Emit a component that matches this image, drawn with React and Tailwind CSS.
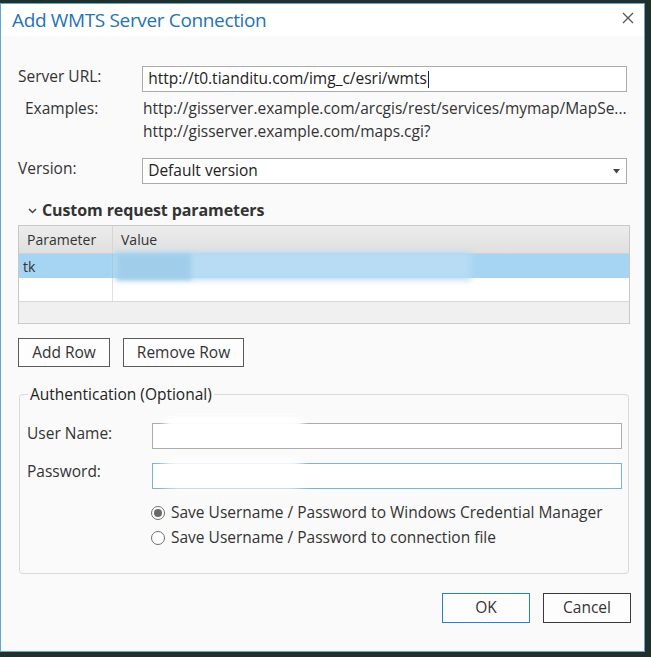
import React from 'react';

const font = { fontFamily: '"Open Sans", "Noto Sans", sans-serif' };

function Field({ children, className = '', border = 'border-[#ababab]' }) {
    return (
        <div className={`h-[26px] bg-white border ${border} flex items-center px-[5px] text-[15.5px] text-[#222] ${className}`}>
            {children}
        </div>
    );
}

function Radio({ checked, label }) {
    return (
        <div className="flex items-center gap-[6px] h-[25px]">
            <span className="w-[14px] h-[14px] rounded-full border border-[#707070] bg-white flex items-center justify-center">
                {checked && <span className="w-[8px] h-[8px] rounded-full bg-[#6a6a6a]" />}
            </span>
            <span>{label}</span>
        </div>
    );
}

export default function App() {
    return (
        <div className="w-[651px] h-[657px] bg-[#22302a] pt-[3px] overflow-hidden text-[15.5px] text-[#333]" style={font}>
            <div className="w-[645px] h-[649px] border border-[#5fa6d6] bg-[#fafafa] flex flex-col">
                {/* Titel */}
                <div className="h-[32px] flex items-center justify-between pl-[11px] pr-[10px] bg-white">
                    <h1 className="text-[19px] text-[#2572b4] tracking-[-0.35px]">Add WMTS Server Connection</h1>
                    <svg width="12" height="12" viewBox="0 0 12 12" className="mt-[-4px]">
                        <path d="M1 1 L11 11 M11 1 L1 11" stroke="#555" strokeWidth="1.3" />
                    </svg>
                </div>

                <div className="px-[17px] pt-[30px] flex flex-col">
                    {/* Server URL */}
                    <div className="flex items-start">
                        <div className="w-[125px] leading-[20px]">Server URL:</div>
                        <Field className="w-[488px]">
                            <span>http://t0.tianditu.com/img_c/esri/wmts</span>
                            <span className="w-px h-[17px] bg-[#222] ml-px" />
                        </Field>
                    </div>

                    {/* Examples */}
                    <div className="flex items-start mt-[5px] leading-[23px]">
                        <div className="w-[125px] pl-[7px]">Examples:</div>
                        <div className="text-[#333] whitespace-nowrap">
                            <div>http://gisserver.example.com/arcgis/rest/services/mymap/MapSe...</div>
                            <div>http://gisserver.example.com/maps.cgi?</div>
                        </div>
                    </div>

                    {/* Version */}
                    <div className="flex items-start mt-[15px]">
                        <div className="w-[125px] leading-[20px]">Version:</div>
                        <Field className="w-[488px] justify-between">
                            <span>Default version</span>
                            <svg width="7" height="5" viewBox="0 0 7 5" className="mr-[1px]">
                                <path d="M0 0 H7 L3.5 4.5 Z" fill="#444" />
                            </svg>
                        </Field>
                    </div>

                    {/* Custom request parameters */}
                    <div className="flex items-center mt-[15px] pl-[10px] h-[22px]">
                        <svg width="9" height="6" viewBox="0 0 9 6" className="mr-[5px] mt-[2px]">
                            <path d="M1 1 L4.5 4.5 L8 1" stroke="#444" strokeWidth="1.5" fill="none" />
                        </svg>
                        <span className="font-bold text-[16px] text-[#333] tracking-[-0.1px]">Custom request parameters</span>
                    </div>

                    <div className="mt-[4px] w-[612px] h-[99px] border border-[#c8c8c8] bg-[#f0f0f0] flex flex-col text-[14px]">
                        <div className="h-[28px] flex bg-gradient-to-b from-[#ececec] to-[#e0e0e0] border-b border-[#d0d0d0]">
                            <div className="w-[94px] pl-[8px] flex items-center border-r border-[#d6d6d6]">Parameter</div>
                            <div className="pl-[8px] flex items-center">Value</div>
                        </div>
                        <div className="h-[24px] flex bg-[#a6d5f3] relative">
                            <div className="w-[94px] pl-[4px] flex items-center border-r border-[#9cc6e2]">tk</div>
                            <div className="flex-1 relative">
                                <div className="absolute left-[2px] top-[-2px] w-[356px] h-[28px] bg-[#b7dcf4] blur-[3px]" />
                                <div className="absolute left-[4px] top-[0px] w-[74px] h-[26px] bg-[#a0cde9] blur-[2px]" />
                            </div>
                        </div>
                        <div className="h-[24px] flex bg-white border-b border-[#d8d8d8]">
                            <div className="w-[94px] border-r border-[#e0e0e0]" />
                        </div>
                    </div>

                    {/* Knappar */}
                    <div className="flex gap-[13px] mt-[14px]">
                        <button className="w-[92px] h-[29px] border border-[#5a5a5a] bg-[#fdfdfd] text-[15.5px] text-[#333]">Add Row</button>
                        <button className="w-[121px] h-[29px] border border-[#5a5a5a] bg-[#fdfdfd] text-[15.5px] text-[#333]">Remove Row</button>
                    </div>

                    {/* Authentication */}
                    <fieldset className="mt-[16px] ml-px w-[610px] h-[191px] border border-[#dadada] rounded-[4px] pl-[7px] pr-[5px]">
                        <legend className="px-[2px] ml-[1px] text-[#222]">Authentication (Optional)</legend>
                        <div className="flex items-start mt-[17px]">
                            <div className="w-[125px] leading-[20px]">User Name:</div>
                            <div className="relative">
                                <Field className="w-[470px]" />
                                <div className="absolute left-[12px] top-[-6px] w-[140px] h-[12px] bg-white blur-[3px] rounded-full" />
                            </div>
                        </div>
                        <div className="flex items-start mt-[14px]">
                            <div className="w-[125px] leading-[20px] mt-[-2px]">Password:</div>
                            <div className="relative">
                                <Field className="w-[470px]" border="border-[#7aafe0]" />
                                <div className="absolute left-[8px] top-[-4px] w-[146px] h-[30px] bg-white blur-[4px] rounded-full" />
                            </div>
                        </div>
                        <div className="ml-[124px] mt-[11px] flex flex-col">
                            <Radio checked label="Save Username / Password to Windows Credential Manager" />
                            <Radio label="Save Username / Password to connection file" />
                        </div>
                    </fieldset>

                    {/* OK / Cancel */}
                    <div className="flex justify-end gap-[13px] mt-[19px]">
                        <button className="w-[88px] h-[30px] border border-[#2b7fd0] bg-[#fdfdfd] text-[15.5px] text-[#333]">OK</button>
                        <button className="w-[88px] h-[30px] border border-[#3a3a3a] bg-[#fdfdfd] text-[15.5px] text-[#333] mr-[-4px]">Cancel</button>
                    </div>
                </div>
            </div>
        </div>
    );
}
